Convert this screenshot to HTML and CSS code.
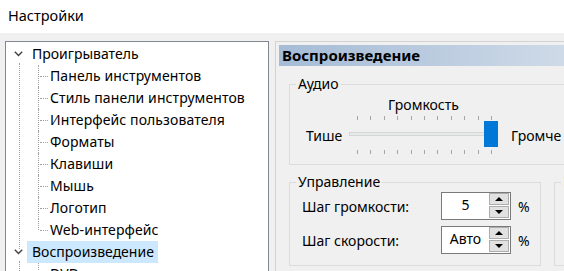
FILE: index.html
```html
<!DOCTYPE html>
<html lang="ru">
<head>
    <meta charset="UTF-8">
    <title>Настройки</title>
    <link rel="stylesheet" href="styles.css">
</head>
<body>
    <div class="titlebar">Настройки</div>

    <div class="main">
        <!-- Tree of sections -->
        <div class="tree">
            <ul class="tree-root">
                <li class="node">
                    <div class="row">
                        <svg class="chev" width="9" height="6" viewBox="0 0 9 6"><polyline points="0.8,0.8 4.5,4.6 8.2,0.8" /></svg>
                        <span class="label">Проигрыватель</span>
                    </div>
                    <ul class="sub">
                        <li><span class="label">Панель инструментов</span></li>
                        <li><span class="label">Стиль панели инструментов</span></li>
                        <li><span class="label">Интерфейс пользователя</span></li>
                        <li><span class="label">Форматы</span></li>
                        <li><span class="label">Клавиши</span></li>
                        <li><span class="label">Мышь</span></li>
                        <li><span class="label">Логотип</span></li>
                        <li><span class="label">Web-интерфейс</span></li>
                    </ul>
                </li>
                <li class="node">
                    <div class="row">
                        <svg class="chev" width="9" height="6" viewBox="0 0 9 6"><polyline points="0.8,0.8 4.5,4.6 8.2,0.8" /></svg>
                        <span class="label selected">Воспроизведение</span>
                    </div>
                    <ul class="sub">
                        <li><span class="label">DVD</span></li>
                    </ul>
                </li>
                <li class="node">
                    <div class="row"><span class="label">Вывод</span></div>
                </li>
            </ul>
        </div>

        <!-- Page -->
        <div class="panel">
            <div class="panel-header">Воспроизведение</div>

            <fieldset class="group audio">
                <legend>Аудио</legend>
                <div class="audio-grid">
                    <span></span>
                    <span class="volume-title">Громкость</span>
                    <span></span>
                    <span class="side-label">Тише</span>
                    <div class="slider">
                        <div class="ticks"></div>
                        <div class="track-row">
                            <div class="track"></div>
                            <div class="thumb"></div>
                        </div>
                        <div class="ticks bottom"></div>
                    </div>
                    <span class="side-label louder">Громче</span>
                </div>
            </fieldset>

            <div class="groups">
                <fieldset class="group control">
                    <legend>Управление</legend>
                    <div class="control-body">
                        <div class="field">
                            <span class="field-label">Шаг громкости:</span>
                            <div class="spin">
                                <span class="spin-value">5</span>
                                <div class="spin-btns">
                                    <span class="spin-btn up"></span>
                                    <span class="spin-btn down"></span>
                                </div>
                            </div>
                            <span class="unit">%</span>
                        </div>
                        <div class="field">
                            <span class="field-label">Шаг скорости:</span>
                            <div class="spin">
                                <span class="spin-value">Авто</span>
                                <div class="spin-btns">
                                    <span class="spin-btn up"></span>
                                    <span class="spin-btn down"></span>
                                </div>
                            </div>
                            <span class="unit">%</span>
                        </div>
                    </div>
                </fieldset>

                <fieldset class="group other">
                    <legend>Повтор</legend>
                    <div class="other-box"></div>
                </fieldset>
            </div>
        </div>
    </div>
</body>
</html>
```

FILE: styles.css
```css
:root {
    --bg: #f0f0f0;
    --tree-border: #828790;
    --group-border: #dcdcdc;
    --dots: #a0a0a0;
    --accent: #0078d7;
}

* {
    box-sizing: border-box;
    margin: 0;
    padding: 0;
}

body {
    background: var(--bg);
    color: #000;
    font-family: "Noto Sans", "Open Sans", sans-serif;
    font-size: 14px;
    width: 564px;
    height: 271px;
    overflow: hidden;
}

.titlebar {
    height: 33px;
    background: #fff;
    padding-left: 8px;
    line-height: 31px;
    font-size: 14.5px;
}

.main {
    display: flex;
    padding: 8px 0 0 5px;
}

/* Tree */

.tree {
    width: 264px;
    height: 240px;
    flex-shrink: 0;
    background: #fff;
    border: 1px solid var(--tree-border);
    padding-top: 1px;
    overflow: hidden;
}

.tree ul {
    list-style: none;
}

.tree-root > li {
    position: relative;
}

.tree-root > li:not(:last-child)::before {
    content: '';
    position: absolute;
    left: 13px;
    top: 20px;
    bottom: -8px;
    border-left: 1px dotted var(--dots);
}

.row {
    height: 22px;
    display: flex;
    align-items: center;
    padding-left: 8px;
}

.chev {
    width: 9px;
    height: 6px;
    margin-right: 4px;
}

.chev polyline {
    fill: none;
    stroke: #404040;
    stroke-width: 1.4;
}

.row .label {
    padding: 0 4px 0 5px;
    line-height: 22px;
}

.row .label.selected {
    background: #cce8ff;
}

.row:not(:has(.chev)) {
    padding-left: 21px;
}

.sub li {
    position: relative;
    height: 22px;
    line-height: 22px;
    padding-left: 44px;
    letter-spacing: 0.1px;
}

.sub li::before {
    content: '';
    position: absolute;
    left: 34px;
    top: 11px;
    width: 8px;
    border-top: 1px dotted var(--dots);
}

.sub li::after {
    content: '';
    position: absolute;
    left: 32px;
    top: 0;
    bottom: 0;
    border-left: 1px dotted var(--dots);
}

.sub li:last-child::after {
    bottom: 11px;
}

/* Right page */

.panel {
    width: 320px;
    flex-shrink: 0;
    margin-left: 6px;
    height: 240px;
    border: 1px solid #d3d3d3;
    padding: 3px;
}

.panel-header {
    height: 21px;
    line-height: 21px;
    padding-left: 3px;
    font-weight: bold;
    font-size: 15px;
    background: linear-gradient(to right, #a5bbd6, #d2dde9);
}

.group {
    border: 1px solid var(--group-border);
    padding: 0;
    min-width: 0;
}

.group legend {
    margin-left: 6px;
    padding: 0 2px;
    line-height: 20px;
}

.audio {
    margin: 8px 0 0 10px;
    width: 320px;
}

.audio-grid {
    display: grid;
    grid-template-columns: 43px 149px auto;
    align-items: center;
    padding: 1px 0 10px 16px;
}

.volume-title {
    text-align: center;
    line-height: 20px;
}

.side-label {
    margin-top: 1px;
}

.side-label.louder {
    margin-left: 13px;
}

.slider {
    display: flex;
    flex-direction: column;
}

.ticks {
    width: 135px;
    height: 4px;
    margin: 1px 0 0 8px;
    background: repeating-linear-gradient(to right, #a6a6a6 0 1px, transparent 1px 13.4px);
}

.ticks.bottom {
    margin-top: 3px;
}

.track-row {
    position: relative;
    height: 26px;
    margin-top: 1px;
}

.track {
    margin-top: 11px;
    height: 4px;
    width: 148px;
    background: #e7eaea;
    border: 1px solid #d6d6d6;
}

.thumb {
    position: absolute;
    left: 135px;
    top: 0;
    width: 14px;
    height: 26px;
    background: var(--accent);
}

.groups {
    display: flex;
    margin: 7px 0 0 10px;
    gap: 13px;
}

.control {
    width: 252px;
    flex-shrink: 0;
}

.control-body {
    padding: 0 0 10px 12px;
}

.field {
    display: flex;
    align-items: center;
    height: 28px;
}

.field + .field {
    margin-top: 6px;
}

.field-label {
    width: 139px;
}

.spin {
    width: 70px;
    height: 28px;
    display: flex;
    background: #fff;
    border: 1px solid #7a7a7a;
}

.spin-value {
    flex: 1;
    text-align: center;
    line-height: 24px;
}

.spin-btns {
    width: 21px;
    display: flex;
    flex-direction: column;
    gap: 1px;
    padding: 0 1px 1px 0;
}

.spin-btn {
    flex: 1;
    background: #e1e1e1;
    border: 1px solid #adadad;
    display: flex;
    align-items: center;
    justify-content: center;
}

.spin-btn::before {
    content: '';
    border-left: 4px solid transparent;
    border-right: 4px solid transparent;
}

.spin-btn.up::before {
    border-bottom: 4px solid #000;
}

.spin-btn.down::before {
    border-top: 4px solid #000;
}

.unit {
    margin-left: 7px;
}

.other {
    width: 120px;
    flex-shrink: 0;
    height: 94px;
}

.other-box {
    width: 60px;
    height: 18px;
    margin: 6px 0 0 9px;
    border: 1px solid #333;
    background: #fff;
}
```
